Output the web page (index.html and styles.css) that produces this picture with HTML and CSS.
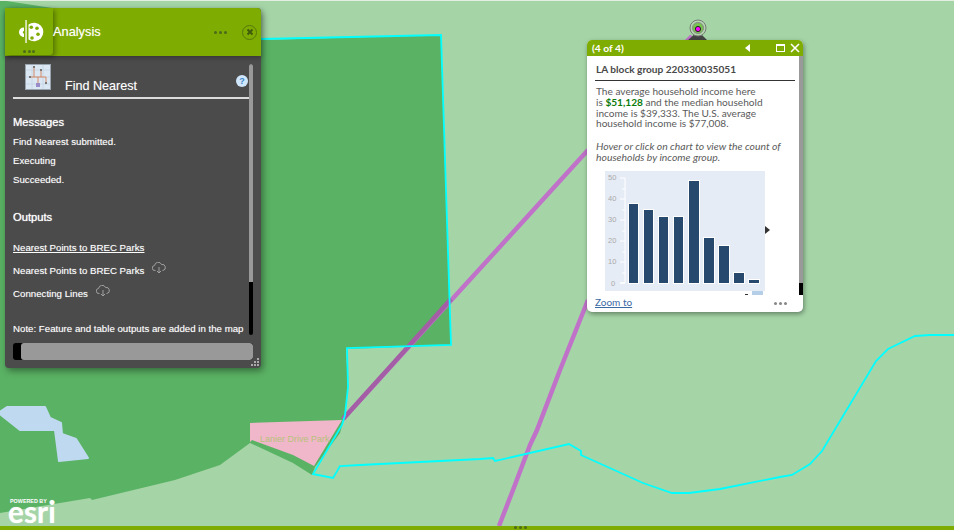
FILE: index.html
```html
<!DOCTYPE html>
<html lang="en">
<head>
<meta charset="utf-8">
<title>Find Nearest</title>
<link rel="stylesheet" href="styles.css">
</head>
<body>
<main class="map">
  <svg class="map-art" width="954" height="530" viewBox="0 0 954 530">
    <polygon class="park" points="0,0 261,40 441,35 451,345 346,349 348,387 345,415 340,433 315,467 312,475 293,463 250,443 220,465 175,480 92,500 90,498 0,513"/>
    <polygon class="water" points="1,411 7,407 45,407 50,418 61,423 62,434 76,439 88,458 59,461 55,430 20,430 1,415"/>
    <polygon class="pink" points="250,423 342,420 314,466 293,455 252,440 250,442"/>
    <text class="park-label" x="260" y="442">Lanier Drive Park</text>
    <polyline class="route" points="343,419 588,150"/>
    <polyline class="route-dark" points="343,419 407,348"/>
    <polyline class="route-dark" points="407,348 451,299"/>
    <polyline class="route" points="588,300 560,370 537,430 530,445 513,490 499,526"/>
    <polyline class="route" points="680,48 692,36"/>
    <polyline class="cyan" points="261,39 441,35 451,345 347,348 348,387 345,415 342,425 313,474 333,478 340,466 360,465 480,459 493,458 495,461 569,444 581,451 581,455 643,483 672,493 689,493 720,489 780,477 792,475 810,464 822,451 876,361 888,349 915,336 930,335 954,335"/>
    <polygon class="pointer" points="698,31 687,41 708,41"/>
    <circle class="ring" cx="698" cy="28" r="8"/>
    <circle class="ring-in" cx="698" cy="28" r="5.5"/>
    <circle class="dot" cx="698" cy="29" r="2.6"/>
  </svg>

  <section class="panel">
    <header class="panel-head">
      <div class="panel-badge">
        <svg width="26" height="26" viewBox="0 0 26 26">
          <path class="white" d="M10.500 5.500A9.300 9.300 0 1 1 10.500 20.500z"/>
          <rect class="white" x="7.400" y="1" width="1.300" height="23"/>
          <path class="white" d="M6 8.500v3.500c-1 0-1.500 1-1 2 .3.600 1 .700 1 .700V18c-3 0-5-2.500-5-5s2-4.500 5-4.500z"/>
          <circle class="hole" cx="13.300" cy="8.300" r="1.800"/>
          <circle class="hole" cx="19" cy="9.300" r="1.800"/>
          <circle class="hole" cx="20" cy="15.300" r="1.800"/>
          <circle class="hole" cx="14" cy="19" r="1.800"/>
        </svg>
        <div class="dots"><i></i><i></i><i></i></div>
      </div>
      <h1 class="panel-title">Analysis</h1>
      <div class="dots head-dots"><i></i><i></i><i></i></div>
      <div class="close-round">
        <svg width="14" height="14" viewBox="0 0 14 14"><path d="M4.500 4.500l5 5M9.500 4.500l-5 5"/></svg>
      </div>
    </header>
    <div class="panel-body">
      <div class="panel-scroll">
        <div class="tool-row">
          <svg class="tool-icon" width="26" height="26" viewBox="0 0 26 26">
            <rect class="ti-bg" x=".5" y=".5" width="25" height="25"/>
            <path class="ti-grid" d="M1 6h24M1 13h24M1 20h24M7 1v24M18 1v24"/>
            <path class="ti-red" d="M9 3v10h-4M13 21v-8h-4M13 13h8v6M16 13V6"/>
            <rect class="ti-dot" x="8" y="2" width="2" height="2"/>
            <rect class="ti-dot" x="15" y="5" width="2" height="2"/>
            <rect class="ti-dot" x="4" y="12" width="2" height="2"/>
            <rect class="ti-dot" x="20" y="18" width="2" height="2"/>
            <rect class="ti-pur" x="11" y="19" width="4" height="4"/>
          </svg>
          <h2 class="tool-name">Find Nearest</h2>
          <span class="help">?</span>
        </div>
        <h3 class="sec sec-msg">Messages</h3>
        <p class="msg">Find Nearest submitted.</p>
        <p class="msg">Executing</p>
        <p class="msg">Succeeded.</p>
        <h3 class="sec sec-out">Outputs</h3>
        <p class="msg out link">Nearest Points to BREC Parks</p>
        <p class="msg out with-cloud">Nearest Points to BREC Parks
          <svg class="cloud" width="14" height="12" viewBox="0 0 14 12"><path d="M3.500 8.500H3a2.500 2.500 0 0 1-.4-5A3.600 3.600 0 0 1 9.500 2.500 3 3 0 0 1 11 8.500h-.5M7 5V11M5 9l2 2 2-2"/></svg>
        </p>
        <p class="msg out with-cloud">Connecting Lines
          <svg class="cloud" width="14" height="12" viewBox="0 0 14 12"><path d="M3.500 8.500H3a2.500 2.500 0 0 1-.4-5A3.600 3.600 0 0 1 9.500 2.500 3 3 0 0 1 11 8.500h-.5M7 5V11M5 9l2 2 2-2"/></svg>
        </p>
        <p class="msg note">Note: Feature and table outputs are added in the map</p>
      </div>
      <div class="vbar"><div class="vthumb"></div></div>
    </div>
    <div class="hbar"><div class="hthumb"></div></div>
    <svg class="grip" width="10" height="10" viewBox="0 0 10 10"><path d="M7 1h2v2H7zM4 4h2v2H4zM7 4h2v2H7zM1 7h2v2H1zM4 7h2v2H4zM7 7h2v2H7z"/></svg>
  </section>

  <section class="popup">
    <header class="pop-head">
      <span class="pop-count">(4 of 4)</span>
      <span class="pop-prev"></span>
      <span class="pop-max"></span>
      <svg class="pop-x" width="10" height="10" viewBox="0 0 10 10"><path d="M1 1l8 8M9 1l-8 8"/></svg>
    </header>
    <div class="pop-main">
      <div class="pop-content">
        <h2 class="pop-title">LA block group 220330035051</h2>
        <p class="pop-text">The average household income here<br>is <b class="money">$51,128</b> and the median household<br>income is $39,333. The U.S. average<br>household income is $77,008.</p>
        <p class="pop-hint">Hover or click on chart to view the count of<br>households by income group.</p>
        <svg class="chart" width="160" height="120" viewBox="0 0 160 120">
          <rect class="chart-bg" width="160" height="120"/>
          <path class="axis" d="M15 7h5v105h-5M15 28h5M17 18h3M15 49h5M17 39h3M15 70h5M17 60h3M15 91h5M17 81h3M15 112h5M17 102h3"/>
          <g class="labels">
            <text x="3" y="9">50</text><text x="3" y="30">40</text><text x="3" y="51">30</text><text x="3" y="72">20</text><text x="3" y="93">10</text><text x="6" y="115">0</text>
          </g>
          <g class="bars">
            <rect x="23.500" y="32.500" width="10" height="80"/>
            <rect x="38.500" y="38.500" width="10" height="74"/>
            <rect x="53.500" y="45.500" width="10" height="67"/>
            <rect x="68.500" y="45.500" width="10" height="67"/>
            <rect x="83.500" y="9.500" width="11" height="103"/>
            <rect x="98.500" y="66.500" width="11" height="46"/>
            <rect x="113.500" y="74.500" width="11" height="38"/>
            <rect x="128.500" y="101.500" width="11" height="11"/>
            <rect x="143.500" y="108.500" width="11" height="4"/>
          </g>
        </svg>
        <span class="chart-bit"></span>
        <span class="chart-dash"></span>
        <span class="chart-next"></span>
      </div>
      <div class="pop-scroll"><div class="pop-thumb"></div><div class="pop-track"></div></div>
    </div>
    <footer class="pop-foot">
      <a class="zoom-to">Zoom to</a>
      <div class="dots foot-dots"><i></i><i></i><i></i></div>
    </footer>
  </section>

  <div class="esri">
    <span class="esri-small">POWERED BY</span>
    <span class="esri-word">esri</span>
  </div>

  <div class="bottom-bar"><div class="dots"><i></i><i></i><i></i></div></div>
</main>
</body>
</html>
```

FILE: styles.css
```css
* { box-sizing: border-box; }
html, body { margin: 0; padding: 0; }
body { width: 954px; height: 530px; overflow: hidden; font-family: "Liberation Sans", Arial, sans-serif; }
h1, h2, h3, p { margin: 0; font-weight: normal; }

.map { position: relative; width: 954px; height: 530px; background: #a5d5a7; border-top: 1px solid #e4efe2; overflow: hidden; }
.map-art { position: absolute; left: 0; top: -1px; }
.park { fill: #5ab264; }
.water { fill: #bfd9f0; stroke: #bfd9f0; stroke-width: 2; stroke-linejoin: round; }
.pink { fill: #f0b6c9; }
.park-label { font: 9px "Liberation Sans", sans-serif; fill: #b7c27c; }
.route { fill: none; stroke: #bf72c8; stroke-width: 4.500; }
.route-dark { fill: none; stroke: #a45ea6; stroke-width: 4.500; }
.cyan { fill: none; stroke: #0ff; stroke-width: 1.800; }
.pointer { fill: #444; }
.ring { fill: #b4d6b0; stroke: #777; stroke-width: 1; }
.ring-in { fill: #78c24e; stroke: #888; stroke-width: 1; }
.dot { fill: #f0f; stroke: #222; stroke-width: 1; }

.dots { display: flex; gap: 2px; }
.dots i { width: 3px; height: 3px; border-radius: 50%; background: #4d6a1a; }

/* Analysis window */
.panel { position: absolute; left: 5px; top: 7px; width: 256px; height: 360px; background: #4b4b4b; border-radius: 4px; box-shadow: 2px 3px 7px rgba(0, 0, 0, .4); color: #fff; display: flex; flex-direction: column; }
.panel-head { height: 48px; flex: none; background: #7fac00; border-radius: 4px 4px 0 0; display: flex; align-items: center; box-shadow: 0 2px 4px rgba(0, 0, 0, .25); }
.panel-badge { width: 48px; height: 47px; align-self: flex-start; background: #7fac00; border-radius: 0 0 3px 0; box-shadow: 2px 2px 5px rgba(0, 0, 0, .35); display: flex; flex-direction: column; align-items: center; padding-top: 11px; gap: 5px; }
.panel-badge svg { margin-left: 3px; }
.panel-badge .dots { gap: 1.500px; }
.panel-title { font-size: 12.800px; flex: 1; margin-top: -2px; text-shadow: 0 0 1px rgba(255, 255, 255, .5); }
.head-dots { margin-right: 15px; }
.close-round { width: 15px; height: 15px; margin-right: 4px; border-radius: 50%; border: 1.500px solid #557a0c; display: flex; align-items: center; justify-content: center; }
.close-round svg { flex: none; }
.close-round path { stroke: #3f5c0c; stroke-width: 2; fill: none; }
.white { fill: #fff; }
.hole { fill: #7fac00; }

.panel-body { flex: 1; display: flex; min-height: 0; padding-left: 8px; overflow: hidden; }
.panel-scroll { width: 236px; flex: none; overflow: hidden; }
.tool-row { position: relative; display: flex; height: 43px; border-bottom: 2px solid #ddd; padding-left: 12px; padding-top: 8px; }
.tool-icon { flex: none; }
.tool-name { font-size: 12.600px; margin-left: 14px; margin-top: 15px; line-height: 15px; text-shadow: 0 0 1px rgba(255, 255, 255, .4); }
.help { position: absolute; right: 1px; top: 19px; width: 12px; height: 12px; border-radius: 50%; background: #cfe6fb; color: #3f87c8; font: bold 9px/12px "Liberation Sans", sans-serif; text-align: center; }
.ti-bg { fill: #dbe7f3; stroke: #9aa5b0; }
.ti-grid { stroke: #c8d8e8; fill: none; }
.ti-red { stroke: #d58a68; fill: none; }
.ti-dot { fill: #777; }
.ti-pur { fill: #9a8cc8; }

.sec { font-size: 11.200px; line-height: 14px; text-shadow: 0 0 1px rgba(255, 255, 255, .9); }
.sec-msg { margin-top: 16px; }
.sec-out { margin-top: 24px; }
.msg { font-size: 9.700px; line-height: 13px; height: 13px; margin-top: 6px; text-shadow: 0 0 1px rgba(255, 255, 255, .45); white-space: nowrap; }
.msg.out { margin-top: 10px; }
.msg.link { margin-top: 17px; text-decoration: underline; }
.msg.note { margin-top: 22px; }
.with-cloud { display: flex; align-items: flex-start; }
.cloud { flex: none; margin: -2px 0 0 8px; }
.cloud path { fill: none; stroke: #a0a0a0; stroke-width: 1; }

.vbar { width: 4px; flex: none; margin-top: 8px; background: #000; height: 271px; border-radius: 2px; overflow: hidden; }
.vthumb { height: 218px; background: #999; }
.hbar { height: 17px; margin: 8px; background: #000; border-radius: 3px; flex: none; display: flex; overflow: hidden; }
.hthumb { margin-left: 8px; flex: 1; background: #999; border-radius: 3px; }
.grip { position: absolute; right: 1px; bottom: 1px; }
.grip path { fill: #aaa; }

/* Popup */
.popup { position: absolute; left: 587px; top: 39px; width: 216px; height: 272px; background: #fff; border-radius: 5px; box-shadow: 1px 2px 5px rgba(0, 0, 0, .4); display: flex; flex-direction: column; overflow: hidden; font-family: Lato, sans-serif; }
.pop-head { height: 16px; flex: none; background: #7fac00; color: #fff; display: flex; align-items: center; padding: 0 3px 0 5px; }
.pop-count { font-size: 10.300px; flex: 1; font-weight: 700; }
.pop-prev { width: 0; height: 0; border: 4px solid transparent; border-right: 5px solid #fff; border-left: 0; margin-right: 26px; }
.pop-max { width: 9px; height: 8px; border: 1px solid #fff; border-top-width: 2px; margin-right: 5px; }
.pop-x path { stroke: #fff; stroke-width: 1.600; fill: none; }

.pop-main { position: relative; height: 239px; flex: none; display: flex; }
.pop-content { width: 212px; flex: none; padding: 7px 0 0 8px; color: #5a5a5a; font-size: 10.100px; line-height: 10.800px; }
.pop-title { font-size: 10.100px; line-height: 13px; font-weight: 700; color: #484848; padding-left: 1px; padding-bottom: 4px; border-bottom: 1px solid #333; width: 200px; }
.pop-text { margin-top: 5px; padding-left: 1px; }
.money { color: #0a7a0a; font-weight: 700; }
.pop-hint { margin-top: 12px; font-style: italic; font-size: 10.400px; padding-left: 1px; }
.chart { display: block; margin: 8px 0 0 10px; }
.chart-bg { fill: #e6ecf5; }
.axis { stroke: #fff; fill: none; stroke-width: 1; }
.labels text { font: 7.500px "Liberation Sans", sans-serif; fill: #a9a9a9; }
.bars rect { fill: #27496d; stroke: #fff; stroke-width: 1; }
.chart-bit { position: absolute; left: 165px; top: 235px; width: 11px; height: 4px; background: #b6cfe8; }
.chart-dash { position: absolute; left: 158px; top: 238px; width: 3px; height: 1px; background: #333; }
.chart-next { position: absolute; left: 178px; top: 170px; width: 0; height: 0; border: 4px solid transparent; border-left: 5px solid #333; border-right: 0; }
.pop-scroll { width: 4px; flex: none; display: flex; flex-direction: column; }
.pop-thumb { height: 227px; background: #999; }
.pop-track { height: 12px; background: #000; }
.pop-foot { flex: 1; display: flex; align-items: center; justify-content: space-between; padding: 0 16px 0 8px; }
.zoom-to { font-size: 10px; color: #3a6aa4; text-decoration: underline; margin-bottom: 3px; }
.foot-dots i { background: #888; }

/* Attribution */
.esri { position: absolute; left: 8px; top: 497px; color: #fff; display: flex; flex-direction: column; }
.esri-small { font: bold 5.400px/6px "Liberation Sans", sans-serif; padding-left: 2px; }
.esri-word { font: bold 29.500px/15px Lato, sans-serif; letter-spacing: .2px; text-shadow: 0 0 1px rgba(255, 255, 255, .6); }

.bottom-bar { position: absolute; left: 0; right: 0; top: 525px; height: 4px; background: #7fac00; display: flex; justify-content: center; padding-left: 86px; }
```
